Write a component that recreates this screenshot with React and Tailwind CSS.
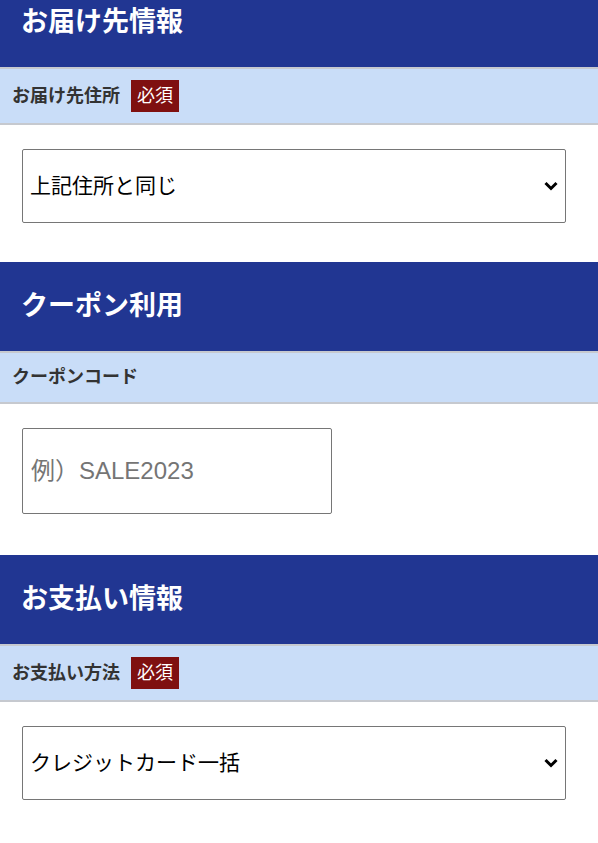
import React from "react";

const FONT = {
  fontFamily: '"Liberation Sans", "Noto Sans CJK JP", sans-serif',
};

const SectionHeader = ({ title }) => (
  <div className="h-[89px] flex items-center pl-[21px] bg-[#213692]">
    <h2 className="text-white text-[27px] font-bold leading-none">{title}</h2>
  </div>
);

const Label = ({ text, required = false }) => (
  <div className="flex items-center gap-[11px] pl-[12px] py-[11px] bg-[#c9ddf8] border-y-2 border-[#c6c9cf]">
    <span className="text-[#333] text-[18px] font-bold leading-[27px]">{text}</span>
    {required && (
      <span className="h-[32px] px-[6px] flex items-center bg-[#7f1010] text-white text-[18px] leading-none">
        必須
      </span>
    )}
  </div>
);

const Chevron = () => (
  <svg
    className="absolute right-[8px] top-1/2 -translate-y-1/2 pointer-events-none"
    width="14"
    height="10"
    viewBox="0 0 14 10"
  >
    <path d="M1.5 2 L7 7.5 L12.5 2" fill="none" stroke="#000" strokeWidth="3" />
  </svg>
);

const SelectBox = ({ value }) => (
  <div className="relative w-[544px] h-[74px]">
    <select
      defaultValue={value}
      className="appearance-none w-full h-full border border-[#767676] rounded-[2px] bg-white pl-[7px] pr-[30px] text-[21px] text-black"
    >
      <option>{value}</option>
    </select>
    <Chevron />
  </div>
);

export default function App() {
  return (
    <div className="bg-white w-[598px] -mt-[22px]" style={FONT}>
      {/* お届け先 */}
      <SectionHeader title="お届け先情報" />
      <Label text="お届け先住所" required />
      <div className="pl-[22px] pt-[24px] pb-[39px]">
        <SelectBox value="上記住所と同じ" />
      </div>

      {/* クーポン */}
      <SectionHeader title="クーポン利用" />
      <Label text="クーポンコード" />
      <div className="pl-[22px] pt-[24px] pb-[41px]">
        <input
          type="text"
          placeholder="例）SALE2023"
          className="w-[310px] h-[86px] border border-[#767676] rounded-[2px] pl-[8px] text-[24px] placeholder:text-[#757575]"
        />
      </div>

      {/* お支払い */}
      <SectionHeader title="お支払い情報" />
      <Label text="お支払い方法" required />
      <div className="pl-[22px] pt-[24px] pb-[40px]">
        <SelectBox value="クレジットカード一括" />
      </div>
    </div>
  );
}
